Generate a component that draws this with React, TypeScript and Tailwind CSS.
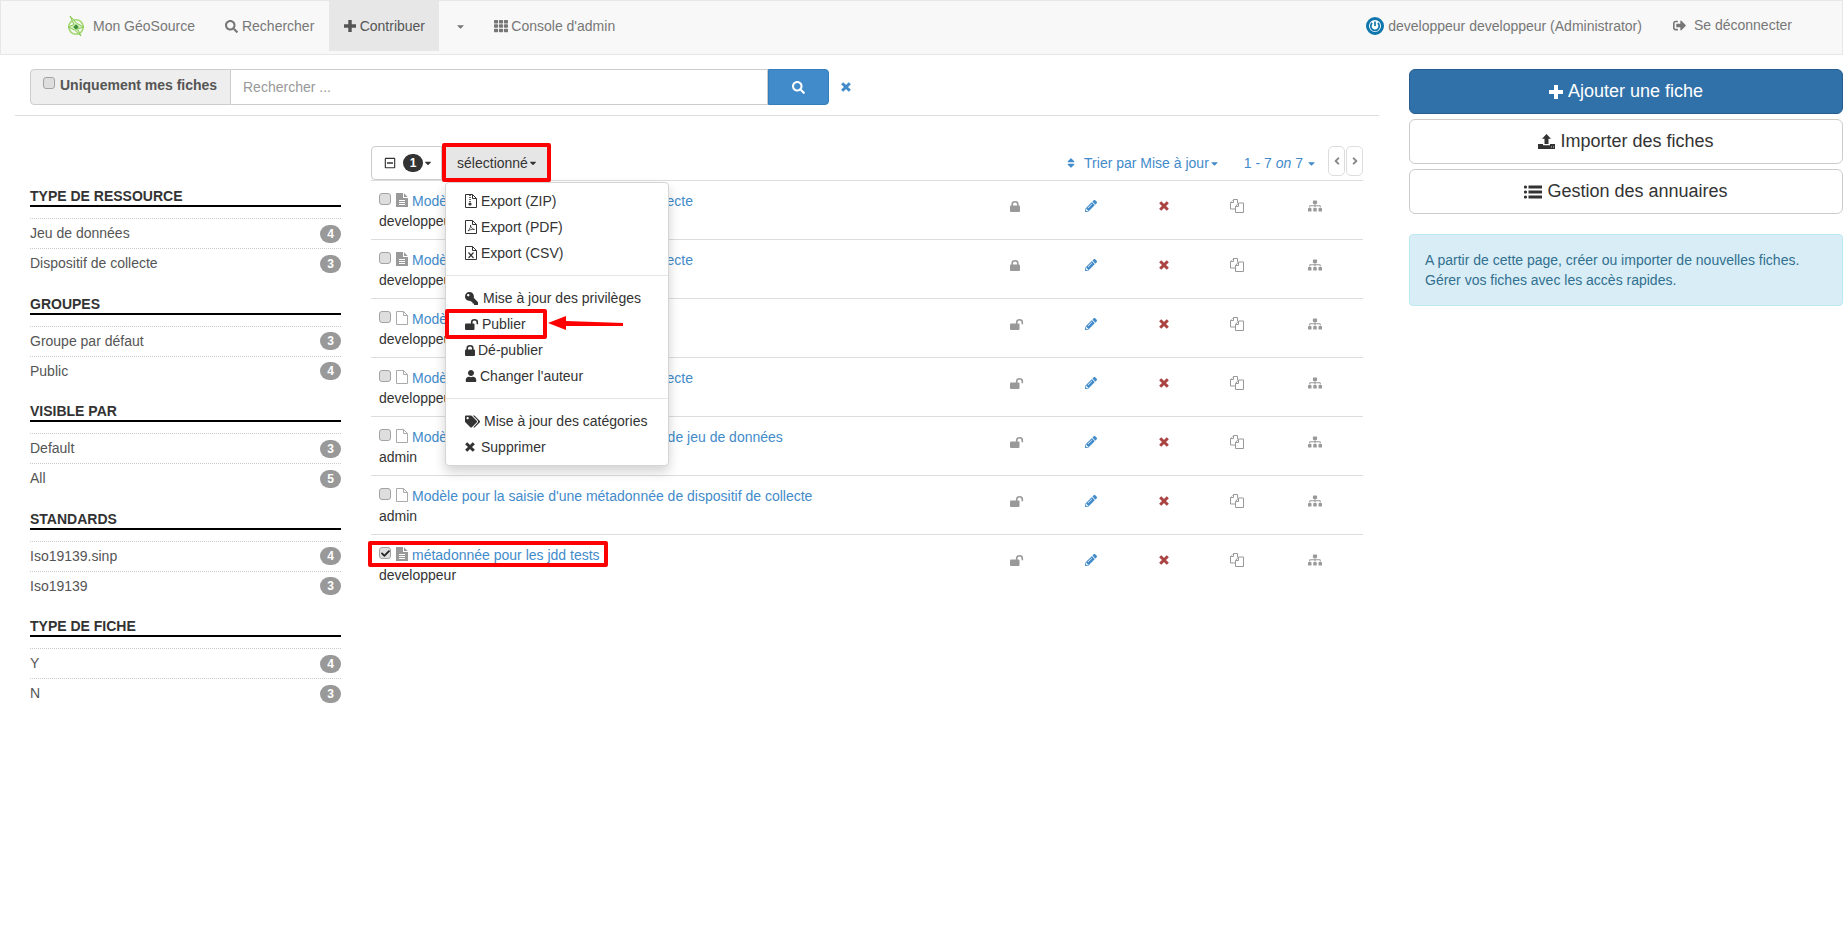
import React from 'react';
import {
  FaSearch, FaCaretDown, FaTh, FaPencilAlt, FaSitemap, FaKey, FaUser, FaTags,
  FaSort, FaRegMinusSquare, FaAngleLeft, FaAngleRight, FaCheck, FaSignOutAlt,
} from 'react-icons/fa';

const facets = [
  { title: 'TYPE DE RESSOURCE', items: [['Jeu de données', 4], ['Dispositif de collecte', 3]] },
  { title: 'GROUPES', items: [['Groupe par défaut', 3], ['Public', 4]] },
  { title: 'VISIBLE PAR', items: [['Default', 3], ['All', 5]] },
  { title: 'STANDARDS', items: [['Iso19139.sinp', 4], ['Iso19139', 3]] },
  { title: 'TYPE DE FICHE', items: [['Y', 4], ['N', 3]] },
];

const records = [
  { title: 'Modèle de saisie pour le dispositif de collecte', author: 'developpeur', filled: true, locked: true },
  { title: 'Modèle de saisie pour le dispositif de collecte', author: 'developpeur', filled: true, locked: true },
  { title: 'Modèle', author: 'developpeur', filled: false, locked: false },
  { title: 'Modèle de saisie pour le dispositif de collecte', author: 'developpeur', filled: false, locked: false },
  { title: "Modèle pour la saisie d'une métadonnée de jeu de données", author: 'admin', filled: false, locked: false },
  { title: "Modèle pour la saisie d'une métadonnée de dispositif de collecte", author: 'admin', filled: false, locked: false },
  { title: 'métadonnée pour les jdd tests', author: 'developpeur', filled: true, locked: false, selected: true },
];

// font-awesome 4 shapes, the react-icons ones are the newer and thinner cut
const PlusIcon = ({ size }: { size: number }) => (
  <svg width={size} height={size} viewBox="0 0 14 14" fill="currentColor">
    <path d="M5 0h4v5h5v4H9v5H5V9H0V5h5z" />
  </svg>
);

const CrossIcon = ({ size }: { size: number }) => (
  <svg width={size} height={size} viewBox="0 0 10 10" fill="none" stroke="currentColor" strokeWidth="3">
    <path d="M1.2 1.2L8.8 8.8M8.8 1.2L1.2 8.8" />
  </svg>
);

const LockIcon = () => (
  <svg width="10" height="11" viewBox="0 0 10 11" className="shrink-0">
    <rect x="0" y="4.5" width="10" height="6.5" rx="1" fill="currentColor" />
    <path d="M2.2 5V3.2a2.8 2.4 0 0 1 5.6 0V5" fill="none" stroke="currentColor" strokeWidth="1.6" />
  </svg>
);

const UnlockIcon = () => (
  <svg width="14" height="11" viewBox="0 0 14 11" className="shrink-0">
    <rect x="0" y="4.5" width="9.5" height="6.5" rx="1" fill="currentColor" />
    <path d="M6.7 5V3.2a2.8 2.4 0 0 1 5.6 0V5.2" fill="none" stroke="currentColor" strokeWidth="1.6" />
  </svg>
);

const CopyIcon = () => (
  <svg width="14" height="14" viewBox="0 0 14 14" fill="#fff" stroke="currentColor" strokeWidth="1">
    <path d="M3.5 .5H7.5V4M3.5 .5L.5 3.5V10H5" />
    <path d="M3.5 .5V3.5H.5" />
    <path d="M8.5 4V7.5H5.5M8.5 4H13.5V13.5H5.5V7.5L8.5 4Z" />
  </svg>
);

const FileFilled = () => (
  <svg width="12" height="14" viewBox="0 0 12 14" className="shrink-0">
    <path d="M0 0H7V5H12V14H0Z" fill="#999" />
    <path d="M8 .3L11.7 4H8Z" fill="#999" />
    <path d="M3 7.5H9M3 9.5H9M3 11.5H9" stroke="#fff" strokeWidth="1" />
  </svg>
);

const FileOutline = ({ children, color = '#aaa' }: { children?: React.ReactNode; color?: string }) => (
  <svg width="12" height="14" viewBox="0 0 12 14" className="shrink-0">
    <path d="M.5 .5H7.5L11.5 4.5V13.5H.5ZM7.5 .5V4.5H11.5" fill="#fff" stroke={color} strokeWidth="1" />
    {children}
  </svg>
);

const UploadIcon = () => (
  <svg width="17" height="15" viewBox="0 0 17 15" fill="currentColor">
    <path d="M8.5 0L13 4.8H10.5V10H6.5V4.8H4Z" />
    <path d="M0 10H5V11.3H12V10H17V15H0Z" />
    <path d="M13 13H13.8M15 13H15.8" stroke="#fff" strokeWidth="1" />
  </svg>
);

const ListIcon = () => (
  <svg width="18" height="14" viewBox="0 0 18 14" fill="currentColor">
    <circle cx="1.5" cy="2" r="1.6" />
    <circle cx="1.5" cy="7" r="1.6" />
    <circle cx="1.5" cy="12" r="1.6" />
    <rect x="4.5" y="0.5" width="13.5" height="3" />
    <rect x="4.5" y="5.5" width="13.5" height="3" />
    <rect x="4.5" y="10.5" width="13.5" height="3" />
  </svg>
);

const Checkbox = ({ checked }: { checked?: boolean }) => (
  <span className="w-[12px] h-[12px] shrink-0 rounded-[3px] border border-[#a3a3a3] bg-[#dedede] flex items-center justify-center text-[#222]">
    {checked && <FaCheck size={9} />}
  </span>
);

const MenuItem = ({ icon, label, box }: { icon: React.ReactNode; label: string; box: string }) => (
  <div className="h-[26px] flex items-center pl-[19px] text-[14px] text-[#333]">
    <span className={`${box} shrink-0 flex items-center`}>{icon}</span>
    <span>{label}</span>
  </div>
);

function Navbar() {
  return (
    <nav className="h-[55px] bg-[#f8f8f8] border border-[#e7e7e7] flex items-start text-[14px] text-[#777]">
      <div className="flex items-center h-[50px] pl-[66px]">
        <svg width="18" height="24" viewBox="0 0 18 24" className="mr-[8px]">
          <circle cx="9" cy="13" r="7.2" fill="none" stroke="#a5d873" strokeWidth="1.6" />
          <path d="M3 2 L10 9.5 L17 13 L10.5 15 L14 22 L7.5 16 L1 13 L7 10.5 Z" fill="#d6efbd" stroke="#86c94f" strokeWidth="1" />
          <rect x="7" y="11" width="4" height="4" fill="#3f8f3a" transform="rotate(45 9 13)" />
        </svg>
        <span>Mon GéoSource</span>
      </div>
      <div className="flex items-center h-[50px] ml-[30px] gap-[4px]">
        <FaSearch size={13} />
        <span>Rechercher</span>
      </div>
      <div className="flex items-center justify-center h-[50px] w-[110px] ml-[15px] bg-[#e7e7e7] text-[#555] gap-[4px]">
        <PlusIcon size={12} />
        <span>Contribuer</span>
      </div>
      <div className="flex items-center h-[50px] ml-[16px]">
        <FaCaretDown size={11} />
      </div>
      <div className="flex items-center h-[50px] ml-[28px] gap-[3px]">
        <FaTh size={14} />
        <span>Console d'admin</span>
      </div>
      <div className="ml-auto flex items-center h-[50px] gap-[4px] pr-[31px]">
        <svg width="18" height="18" viewBox="0 0 18 18">
          <circle cx="9" cy="9" r="7.5" fill="#fff" stroke="#0f76ad" strokeWidth="3" />
          <path d="M9 4.5V9M6.2 6a4.2 4.2 0 1 0 5.6 0" fill="none" stroke="#0f76ad" strokeWidth="1.7" />
        </svg>
        <span>developpeur developpeur (Administrator)</span>
      </div>
      <div className="flex items-center h-[50px] pb-[2px] gap-[8px] pr-[50px]">
        <FaSignOutAlt size={13} />
        <span>Se déconnecter</span>
      </div>
    </nav>
  );
}

function SearchBar() {
  return (
    <div className="flex items-center h-[36px] pl-[15px] text-[14px]">
      <div className="h-full w-[201px] bg-[#eee] border border-[#ccc] rounded-l-[4px] flex items-center pl-[12px] pb-[4px] gap-[5px] font-bold text-[#555]">
        <span className="-mt-[4px]">
          <Checkbox />
        </span>
        <span>Uniquement mes fiches</span>
      </div>
      <div className="h-full w-[537px] border-y border-r border-[#ccc] flex items-center pl-[12px] text-[#999] bg-white">
        Rechercher ...
      </div>
      <div className="h-full w-[61px] bg-[#428bca] border border-[#357ebd] rounded-r-[4px] flex items-center justify-center text-white">
        <FaSearch size={13} />
      </div>
      <span className="ml-[12px] text-[#428bca]">
        <CrossIcon size={10} />
      </span>
    </div>
  );
}

function Sidebar() {
  return (
    <aside className="w-[311px] shrink-0 ml-[15px] mr-[30px] pt-[70px] text-[14px]">
      {facets.map((f) => (
        <div key={f.title} className="h-[107.5px]">
          <h3 className="h-[19px] font-bold text-[#333] leading-[21px] border-b-2 border-black box-content">{f.title}</h3>
          <ul className="mt-[11px]">
            {f.items.map(([label, count]) => (
              <li key={label} className="h-[30px] border-t border-dotted border-[#ccc] flex items-center justify-between text-[#555]">
                <span>{label}</span>
                <span className="w-[21px] h-[18px] rounded-full bg-[#999] text-white text-[12px] font-bold flex items-center justify-center">
                  {count}
                </span>
              </li>
            ))}
          </ul>
        </div>
      ))}
    </aside>
  );
}

function Toolbar() {
  return (
    <div className="relative flex items-start h-[34px] text-[14px]">
      <div className="h-[34px] w-[71px] border border-[#ccc] rounded-l-[4px] flex items-center pl-[12px] text-[#333]">
        <FaRegMinusSquare size={12} />
        <span className="ml-[7px] w-[20px] h-[18px] rounded-full bg-[#333] text-white text-[12px] font-bold flex items-center justify-center">1</span>
        <FaCaretDown size={10} />
      </div>
      <div className="relative">
        <div className="h-[39px] w-[109px] -mt-[3px] pt-[1px] pl-[2px] border-[4px] border-[#ff0000] rounded-[2px] bg-[#e6e6e6] flex items-center justify-center text-[#333]">
          <span>sélectionné</span>
          <FaCaretDown size={10} />
        </div>
        <div className="absolute z-20 top-[36px] left-[3px] w-[224px] h-[284px] bg-white border border-[#d5d5d5] rounded-[4px] shadow-[0_6px_12px_rgba(0,0,0,0.175)] pt-[5px]">
          <MenuItem box="w-[16px]" label="Export (ZIP)" icon={
            <FileOutline color="#333"><path d="M5 1V8" stroke="#333" strokeWidth="1.5" strokeDasharray="1 1" /><circle cx="5" cy="10" r="1.6" fill="#333" /></FileOutline>
          } />
          <MenuItem box="w-[16px]" label="Export (PDF)" icon={
            <FileOutline color="#333"><path d="M3 11C5 9 6 6 5.5 5C5.5 7 7 9 9.5 9.5C7 9 4 10 3 11Z" fill="none" stroke="#333" strokeWidth=".8" /></FileOutline>
          } />
          <MenuItem box="w-[16px]" label="Export (CSV)" icon={
            <FileOutline color="#333"><path d="M3.5 6.5L8.5 12M8.5 6.5L3.5 12" stroke="#333" strokeWidth="1.2" /></FileOutline>
          } />
          <div className="h-px bg-[#e5e5e5] my-[9px]" />
          <MenuItem box="w-[18px]" label="Mise à jour des privilèges" icon={<FaKey size={13} className="-scale-x-100" />} />
          <div className="relative">
            <MenuItem box="w-[17px]" label="Publier" icon={<UnlockIcon />} />
            <span className="absolute -top-[2px] -left-[1px] w-[102px] h-[30px] border-[4px] border-[#ff0000] rounded-[2px]" />
            <svg width="78" height="16" viewBox="0 0 78 16" className="absolute left-[101px] top-[5px]">
              <path d="M1 7 L19 0 L19 5 L76 7 L76 10 L19 10 L19 14 Z" fill="#ff0000" />
            </svg>
          </div>
          <MenuItem box="w-[13px]" label="Dé-publier" icon={<LockIcon />} />
          <MenuItem box="w-[15px]" label="Changer l'auteur" icon={<FaUser size={12} />} />
          <div className="h-px bg-[#e5e5e5] my-[9px]" />
          <MenuItem box="w-[19px]" label="Mise à jour des catégories" icon={<FaTags size={15} />} />
          <MenuItem box="w-[16px]" label="Supprimer" icon={<CrossIcon size={10} />} />
        </div>
      </div>
      <div className="ml-auto flex items-start text-[#428bca]">
        <div className="flex items-center h-[34px] gap-[7px]">
          <FaSort size={12} />
          <span className="flex items-center">Trier par Mise à jour<FaCaretDown size={11} /></span>
        </div>
        <div className="flex items-center h-[34px] ml-[24px] mr-[11px]">
          <span>1 - 7 <em>on</em> 7</span>
          <span className="ml-[3px]"><FaCaretDown size={11} /></span>
        </div>
        <div className="w-[17px] h-[30px] mr-[1px] border border-[#ddd] rounded-[5px] flex items-center justify-center text-[#888]">
          <FaAngleLeft size={12} />
        </div>
        <div className="w-[17px] h-[30px] border border-[#ddd] rounded-[5px] flex items-center justify-center text-[#888]">
          <FaAngleRight size={12} />
        </div>
      </div>
    </div>
  );
}

function RecordRow({ r }: { r: (typeof records)[number] }) {
  return (
    <div className="h-[59px] border-t border-[#ddd] flex text-[14px]">
      <div className="flex-1 pl-[8px] pt-[10px]">
        <div className="relative flex w-fit items-center h-[20px]">
          <span className="-mt-[4px] mr-[5px]">
            <Checkbox checked={r.selected} />
          </span>
          <span className="-mt-[2px] mr-[4px]">{r.filled ? <FileFilled /> : <FileOutline />}</span>
          <span className="text-[#428bca]">{r.title}</span>
          {r.selected && <span className="absolute -top-[4px] -bottom-[2px] -left-[11px] -right-[8px] border-[4px] border-[#ff0000] rounded-[2px]" />}
        </div>
        <div className="h-[20px] leading-[20px] text-[#333]">{r.author}</div>
      </div>
      <div className="flex h-[50px] items-center pr-[11px]">
        <span className="w-[72px] flex justify-center text-[#999]">
          <span className="w-[10px] flex">{r.locked ? <LockIcon /> : <UnlockIcon />}</span>
        </span>
        <span className="w-[80px] flex justify-center text-[#428bca]"><FaPencilAlt size={12} /></span>
        <span className="w-[66px] flex justify-center text-[#a94442]"><CrossIcon size={10} /></span>
        <span className="w-[80px] flex justify-center text-[#999]"><CopyIcon /></span>
        <span className="w-[75px] flex justify-center text-[#999]"><FaSitemap size={14} /></span>
      </div>
    </div>
  );
}

function RightPanel() {
  return (
    <div className="w-[434px] shrink-0 ml-[30px] pt-[14px] text-[18px]">
      <div className="h-[45px] rounded-[6px] bg-[#3071a9] border border-[#285e8e] text-white flex items-center justify-center gap-[5px]">
        <PlusIcon size={14} /> Ajouter une fiche
      </div>
      <div className="h-[45px] mt-[5px] rounded-[6px] bg-white border border-[#ccc] text-[#333] flex items-center justify-center gap-[5px]">
        <UploadIcon /> Importer des fiches
      </div>
      <div className="h-[45px] mt-[5px] rounded-[6px] bg-white border border-[#ccc] text-[#333] flex items-center justify-center gap-[5px]">
        <ListIcon /> Gestion des annuaires
      </div>
      <div className="mt-[20px] h-[72px] rounded-[4px] bg-[#d9edf7] border border-[#bce8f1] text-[#31708f] text-[14px] leading-[20px] px-[15px] pt-[15px]">
        A partir de cette page, créer ou importer de nouvelles fiches.
        <br />
        Gérer vos fiches avec les accès rapides.
      </div>
    </div>
  );
}

export default function App() {
  return (
    <div className="min-h-[940px] bg-white font-['Liberation_Sans',Arial,sans-serif]">
      <Navbar />
      <div className="flex">
        <div className="w-[1364px] ml-[15px] shrink-0 pt-[14px]">
          <SearchBar />
          <div className="h-px bg-[#ddd] mt-[10px]" />
          <div className="flex">
            <Sidebar />
            <main className="w-[992px] pt-[30px]">
              <Toolbar />
              {records.map((r, i) => (
                <RecordRow key={i} r={r} />
              ))}
            </main>
          </div>
        </div>
        <RightPanel />
      </div>
    </div>
  );
}
